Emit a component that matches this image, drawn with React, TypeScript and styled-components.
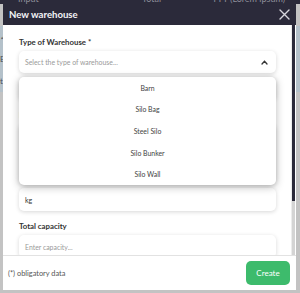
import styled, { createGlobalStyle } from "styled-components"

const GlobalStyle = createGlobalStyle`
  * {
    box-sizing: border-box;
  }
  body {
    margin: 0;
    font-family: Lato, "Open Sans", sans-serif;
    background: #c3c3c3;
  }
`

const warehouseTypes = ["Barn", "Silo Bag", "Steel Silo", "Silo Bunker", "Silo Wall"]

export default function App() {
  return (
    <>
      <GlobalStyle />
      <Page>
        <PageTop>
          <PageTopText $left={18}>Input</PageTopText>
          <PageTopText $left={142}>Total</PageTopText>
          <PageTopText $left={212}>TTT (Lorem ipsum)</PageTopText>
        </PageTop>
        <PageRow>
          <span>✓</span>
          <span>Ei</span>
          <span>t</span>
        </PageRow>

        <Modal>
          <Header>
            <Title>New warehouse</Title>
            <CloseButton aria-label="Close">
              <svg width="11" height="11" viewBox="0 0 11 11">
                <path d="M1 1 L10 10 M10 1 L1 10" stroke="#d6d6dc" strokeWidth="1.4" strokeLinecap="round" />
              </svg>
            </CloseButton>
          </Header>

          <Body>
            <Content>
              <Group>
                <Label>Type of Warehouse *</Label>
                <SelectWrap>
                  <SelectBox>
                    <Placeholder>Select the type of warehouse...</Placeholder>
                    <svg width="7" height="5" viewBox="0 0 7 5">
                      <path d="M1 4 L3.5 1.3 L6 4" fill="none" stroke="#333" strokeWidth="1.3" strokeLinecap="round" />
                    </svg>
                  </SelectBox>
                  <Dropdown>
                    {warehouseTypes.map((type) => (
                      <Option key={type}>{type}</Option>
                    ))}
                  </Dropdown>
                </SelectWrap>
                <Input />
              </Group>

              <Group>
                <Label>Description</Label>
                <TextArea />
                <Input>
                  <Value>kg</Value>
                </Input>
              </Group>

              <Group>
                <Label>Total capacity</Label>
                <Input>
                  <Placeholder>Enter capacity...</Placeholder>
                </Input>
              </Group>
            </Content>
            <ScrollTrack>
              <ScrollThumb />
            </ScrollTrack>
          </Body>

          <Footer>
            <Note>(*) obligatory data</Note>
            <CreateButton>Create</CreateButton>
          </Footer>
        </Modal>
      </Page>
    </>
  )
}

const Page = styled.div`
  position: relative;
  width: 300px;
  height: 293px;
  overflow: hidden;
  background: #c3c3c3;
`

const PageTop = styled.div`
  position: relative;
  height: 4px;
  background: #2b2a3a;
  overflow: hidden;
`

const PageTopText = styled.span<{ $left: number }>`
  position: absolute;
  left: ${(p) => p.$left}px;
  top: -7px;
  font-size: 9px;
  color: #8d8d99;
  white-space: nowrap;
`

const PageRow = styled.div`
  margin-top: 22px;
  height: 66px;
  background: #b4c1ca;
  display: flex;
  flex-direction: column;
  justify-content: space-around;
  font-size: 8px;
  color: #4a4f55;
`

const Modal = styled.div`
  position: absolute;
  left: 3px;
  top: 4px;
  width: 293px;
  height: 286px;
  background: #fff;
  display: flex;
  flex-direction: column;
  overflow: hidden;
`

const Header = styled.div`
  height: 21px;
  flex-shrink: 0;
  background: #2b2a3a;
  display: flex;
  align-items: center;
  justify-content: space-between;
  padding: 0 6px;
`

const Title = styled.h1`
  margin: 0;
  font-size: 9.6px;
  font-weight: 700;
  color: #f4f4f8;
`

const CloseButton = styled.button`
  border: none;
  background: none;
  padding: 0;
  display: flex;
  align-items: center;
`

const Body = styled.div`
  flex: 1;
  display: flex;
  min-height: 0;
`

const Content = styled.div`
  flex: 1;
  padding: 12px 15px 0 16px;
  display: flex;
  flex-direction: column;
  gap: 10px;
  overflow: hidden;
`

const Group = styled.div`
  display: flex;
  flex-direction: column;
  gap: 4px;
  flex-shrink: 0;
`

const Label = styled.label`
  font-size: 7.8px;
  line-height: 10px;
  font-weight: 700;
  color: #333;
`

const SelectWrap = styled.div`
  position: relative;
`

const fieldBox = `
  background: #fff;
  border-radius: 5px;
  box-shadow: 0 1px 4px rgba(0, 0, 0, 0.16);
`

const SelectBox = styled.div`
  ${fieldBox}
  height: 22px;
  display: flex;
  align-items: center;
  justify-content: space-between;
  padding: 0 8px 0 6px;
`

const Input = styled.div`
  ${fieldBox}
  height: 23px;
  display: flex;
  align-items: center;
  padding: 0 6px;
`

const TextArea = styled.div`
  ${fieldBox}
  height: 60px;
`

const Placeholder = styled.span`
  font-size: 6.9px;
  color: #9a9a9a;
`

const Value = styled.span`
  font-size: 7px;
  color: #333;
`

const Dropdown = styled.ul`
  position: absolute;
  z-index: 2;
  top: calc(100% + 4px);
  left: 0;
  right: 0;
  margin: 0;
  padding: 0;
  list-style: none;
  background: #fff;
  border-radius: 5px;
  box-shadow: 0 2px 9px rgba(0, 0, 0, 0.28);
`

const Option = styled.li`
  height: 21.6px;
  display: flex;
  align-items: center;
  justify-content: center;
  font-size: 6.9px;
  color: #444;
`

const ScrollTrack = styled.div`
  width: 4px;
  flex-shrink: 0;
  margin-right: 1px;
  background: #d4d4d4;
  border-left: 1px solid #ececec;
`

const ScrollThumb = styled.div`
  height: 176px;
  background: #2b2a3a;
`

const Footer = styled.div`
  height: 35px;
  flex-shrink: 0;
  border-top: 1px solid #e2e2e2;
  display: flex;
  align-items: center;
  justify-content: space-between;
  padding: 0 6px 0 5px;
`

const Note = styled.span`
  font-size: 7.4px;
  color: #555;
`

const CreateButton = styled.button`
  width: 44px;
  height: 24px;
  border: none;
  border-radius: 5px;
  background: #3dbb6c;
  color: #fff;
  font-family: inherit;
  font-size: 8px;
`
